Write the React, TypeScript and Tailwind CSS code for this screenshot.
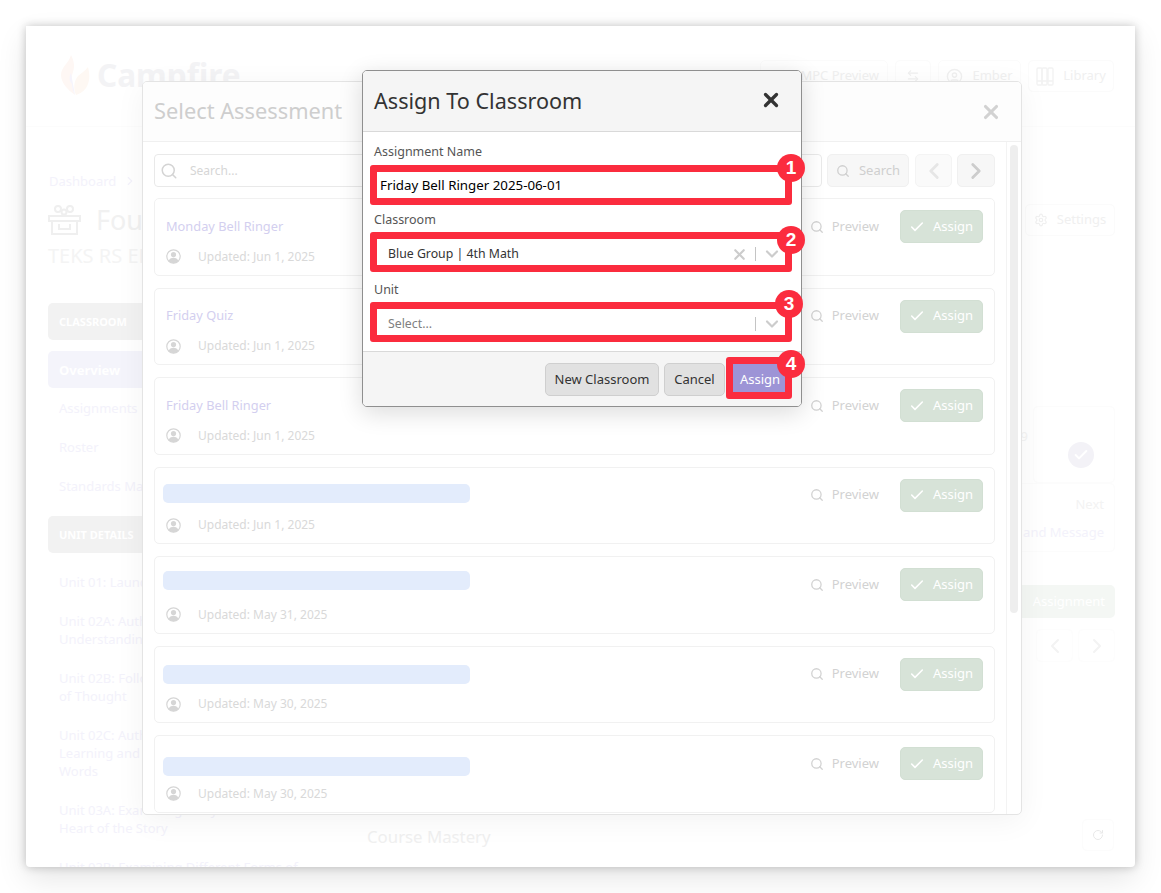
import { Search, Check, X, ChevronDown, ChevronLeft, ChevronRight, Settings, ArrowLeftRight, CircleUser, RotateCw } from "lucide-react";

const font = { fontFamily: '"Noto Sans", sans-serif' };

function UserIcon() {
  return (
    <svg width="15" height="15" viewBox="0 0 15 15" className="shrink-0">
      <circle cx="7.5" cy="7.5" r="6.7" fill="none" stroke="#d6d6d6" strokeWidth="1.2" />
      <circle cx="7.5" cy="5.6" r="2.6" fill="#d6d6d6" />
      <path d="M2.6 12c.8-2.4 2.6-3.3 4.9-3.3s4.1.9 4.9 3.3c-1.2 1.4-3 2.2-4.9 2.2s-3.7-.8-4.9-2.2z" fill="#d6d6d6" />
    </svg>
  );
}

function Flame() {
  return (
    <svg width="30" height="42" viewBox="0 0 30 42" className="shrink-0">
      <path d="M11 1C14 7 15 12 13 18c-2 5-2 14 2 23C8 36 1 29 1 21 1 13 9 9 11 1z" fill="#fef7f4" />
      <path d="M12 30c-3-3-3-7-1-11l4 22c-2-3-3-7-3-11z" fill="#f6f4fc" />
      <path d="M28 13c2 8 2 15-2 21-3 4-7 6-10 7-3-7-2-14 2-19 3-3 7-5 10-9z" fill="#fef8f3" />
    </svg>
  );
}

function GiftIcon() {
  return (
    <svg width="33" height="30" viewBox="0 0 33 30" fill="none" stroke="#efefef" strokeWidth="2" className="shrink-0">
      <circle cx="10" cy="4" r="3" />
      <circle cx="22" cy="4" r="3" />
      <circle cx="16" cy="7" r="2.5" />
      <path d="M1 11h31v5H1zM4 16v13h25V16M11 19v5h11v-5" />
    </svg>
  );
}

function LibraryIcon() {
  return (
    <svg width="18" height="19" viewBox="0 0 18 19" fill="none" stroke="#f2f2f2" strokeWidth="1.3" className="shrink-0">
      <rect x="1" y="1" width="5" height="17" rx="1" />
      <rect x="6" y="1" width="5" height="17" rx="1" />
      <rect x="12" y="1" width="5" height="17" rx="1" />
      <path d="M1 14h16" />
    </svg>
  );
}

const cards = [
  { title: "Monday Bell Ringer", date: "Jun 1, 2025", pad: "pt-[18px]" },
  { title: "Friday Quiz", date: "Jun 1, 2025", pad: "pt-[17px]" },
  { title: "Friday Bell Ringer", date: "Jun 1, 2025", pad: "pt-[18px]" },
  { title: "", date: "Jun 1, 2025", pad: "pt-[16px]" },
  { title: "", date: "May 31, 2025", pad: "pt-[14px]" },
  { title: "", date: "May 30, 2025", pad: "pt-[18px]" },
  { title: "", date: "May 30, 2025", pad: "pt-[21px]" },
];

function Card({ title, date, pad }: { title: string; date: string; pad: string }) {
  return (
    <div className="h-[77.5px] shrink-0 rounded-[5px] border border-[#f1f1f1] bg-white pl-[8px] pr-[11px] flex">
      <div className="flex-1 flex flex-col">
        <div className={"h-[47px] " + pad}>
          {title ? (
            <div className="pl-[3px] text-[12.8px] leading-[18px] text-[#d3cfef]">{title}</div>
          ) : (
            <div className="h-[19px] w-[307px] rounded-[5px] bg-[#e3ecfc]" />
          )}
        </div>
        <div className="flex items-center gap-[17px] pl-[3px] mt-[2.5px]">
          <UserIcon />
          <span className="text-[12px] leading-[16px] text-[#d9d9d9]">Updated: {date}</span>
        </div>
      </div>
      <div className="flex items-start pt-[11px]">
        <div className="flex items-center h-[33px] gap-[8px] text-[#d2d2d2] mr-[21px]">
          <Search size={14} strokeWidth={2.2} />
          <span className="text-[13px]">Preview</span>
        </div>
        <div className="flex items-center gap-[8px] pl-[8px] h-[33px] w-[83px] rounded-[5px] bg-[#d7e3d8] border border-[#d2dfd3] text-white">
          <Check size={16} strokeWidth={2.4} />
          <span className="text-[13px]">Assign</span>
        </div>
      </div>
    </div>
  );
}

function SelectAssessment() {
  return (
    <div className="absolute left-[142px] top-[81px] z-10 w-[880px] h-[734px] rounded-[5px] border border-[#e4e4e4] bg-white shadow-[0_6px_30px_rgba(0,0,0,0.05)] flex flex-col overflow-hidden">
      <div className="h-[60px] shrink-0 bg-[#fdfdfd] border-b border-[#f0f0f0] pl-[11px] pr-[19px] flex items-center justify-between">
        <span className="text-[21.8px] text-[#cecece]">Select Assessment</span>
        <X size={22} strokeWidth={3.4} className="text-[#d2d2d2]" />
      </div>
      <div className="flex-1 flex min-h-0">
        <div className="flex-1 pl-[11px] pr-[11px] pt-[12px] flex flex-col gap-[12px] overflow-hidden">
          <div className="flex items-stretch h-[33px] shrink-0 mb-[-1px]">
            <div className="flex-1 rounded-[4px] border border-[#e9e9e9] flex items-center pl-[5px] gap-[12px]">
              <Search size={18} strokeWidth={2} className="text-[#d4d4d4]" />
              <span className="text-[12px] text-[#d6d6d6]">Search...</span>
            </div>
            <div className="ml-[5px] w-[82px] rounded-[5px] bg-[#f7f7f7] border border-[#f0f0f0] flex items-center justify-center gap-[9px] text-[#cfcfcf]">
              <Search size={14} strokeWidth={2.2} />
              <span className="text-[13px]">Search</span>
            </div>
            <div className="ml-[6px] w-[37px] rounded-[5px] bg-[#fafafa] border border-[#f4f4f4] flex items-center justify-center text-[#e6e6e6]">
              <ChevronLeft size={26} strokeWidth={2.6} />
            </div>
            <div className="ml-[5px] w-[38px] rounded-[5px] bg-[#f7f7f7] border border-[#f0f0f0] flex items-center justify-center text-[#cdcdcd]">
              <ChevronRight size={26} strokeWidth={2.6} />
            </div>
          </div>
          {cards.map((c, i) => (
            <Card key={i} title={c.title} date={c.date} pad={c.pad} />
          ))}
        </div>
        <div className="w-[15px] shrink-0 border-l border-[#f3f3f3] pt-[3px] pl-[3px]">
          <div className="h-[468px] w-[8px] rounded-[4px] bg-[#eeeeee]" />
        </div>
      </div>
    </div>
  );
}

function SelectBox({ value, placeholder }: { value?: string; placeholder?: string }) {
  return (
    <div className="h-[26px] flex items-center pl-[14px] pr-[8px] bg-white">
      <span className={"flex-1 text-[12.3px] " + (value ? "text-[#333333]" : "text-[#808080]")}>{value || placeholder}</span>
      {value && <X size={17} strokeWidth={3} className="text-[#cccccc] mr-[7px]" />}
      <div className="h-[14px] w-[1px] bg-[#c4c4c4] mr-[6px]" />
      <ChevronDown size={20} strokeWidth={2.6} className="text-[#cccccc]" />
    </div>
  );
}

function AssignModal() {
  return (
    <div className="absolute left-[362px] top-[70px] z-20 w-[440px] h-[337px] rounded-[5px] border border-[#8f8f8f] bg-white shadow-[0_6px_24px_rgba(0,0,0,0.14)] flex flex-col overflow-hidden">
      <div className="h-[61px] shrink-0 bg-[#f5f5f5] border-b border-[#d9d9d9] pl-[11px] pr-[19px] flex items-center justify-between">
        <span className="text-[21.6px] text-[#333333]">Assign To Classroom</span>
        <X size={22} strokeWidth={3.6} className="text-[#333333] mb-[2px]" />
      </div>
      <div className="flex-1 px-[11px] pt-[11px]">
        <div className="text-[12.5px] leading-[18px] text-[#555555]">Assignment Name</div>
        <div className="h-[26px] mt-[12px] flex items-center pl-[6px] text-[13.3px] text-black">Friday Bell Ringer 2025-06-01</div>
        <div className="text-[12.5px] leading-[18px] text-[#555555] mt-[12px]">Classroom</div>
        <div className="mt-[12px]"><SelectBox value="Blue Group | 4th Math" /></div>
        <div className="text-[12.5px] leading-[18px] text-[#555555] mt-[14px]">Unit</div>
        <div className="mt-[12px]"><SelectBox placeholder="Select..." /></div>
      </div>
      <div className="h-[55px] shrink-0 bg-[#f5f5f5] border-t border-[#d9d9d9] flex items-start justify-end gap-[5px] pt-[11px] pr-[12px]">
        <div className="h-[33px] w-[114px] rounded-[5px] bg-[#e1e1e1] border border-[#cfcfcf] flex items-center justify-center text-[13px] text-[#333333]">New Classroom</div>
        <div className="h-[33px] w-[61px] rounded-[5px] bg-[#e1e1e1] border border-[#cfcfcf] flex items-center justify-center text-[13px] text-[#333333]">Cancel</div>
        <div className="h-[33px] w-[58px] ml-[1px] rounded-[5px] bg-[#9d94d6] flex items-center justify-center text-[13px] text-white">Assign</div>
      </div>
    </div>
  );
}

function Marks() {
  return (
    <>
      <div className="absolute z-30 left-[370px] top-[165px] w-[422px] h-[40px] rounded-[3px] border-[7px] border-[#fb2c3e]" />
      <div className="absolute z-30 left-[370px] top-[232px] w-[422px] h-[40px] rounded-[3px] border-[7px] border-[#fb2c3e]" />
      <div className="absolute z-30 left-[370px] top-[302px] w-[422px] h-[40px] rounded-[3px] border-[7px] border-[#fb2c3e]" />
      <div className="absolute z-30 left-[726px] top-[357px] w-[66px] h-[42px] rounded-[3px] border-[7px] border-[#fb2c3e]" />
      <div className="absolute z-40 left-[777px] top-[154px] w-[28px] h-[28px] rounded-full bg-[#fb2c3e] text-white flex items-center justify-center text-[19px] font-bold" style={{ fontFamily: '"Liberation Sans", sans-serif' }}>1</div>
      <div className="absolute z-40 left-[777px] top-[226px] w-[28px] h-[28px] rounded-full bg-[#fb2c3e] text-white flex items-center justify-center text-[19px] font-bold" style={{ fontFamily: '"Liberation Sans", sans-serif' }}>2</div>
      <div className="absolute z-40 left-[775px] top-[290px] w-[28px] h-[28px] rounded-full bg-[#fb2c3e] text-white flex items-center justify-center text-[19px] font-bold" style={{ fontFamily: '"Liberation Sans", sans-serif' }}>3</div>
      <div className="absolute z-40 left-[777px] top-[350px] w-[28px] h-[28px] rounded-full bg-[#fb2c3e] text-white flex items-center justify-center text-[19px] font-bold" style={{ fontFamily: '"Liberation Sans", sans-serif' }}>4</div>
    </>
  );
}

const navItems = ["Assignments", "Roster", "Standards Mastery"];
const units: string[][] = [
  ["Unit 01: Launching the Workshop"],
  ["Unit 02A: Author's Purpose and", "Understanding Main Ideas"],
  ["Unit 02B: Following an Author's Line", "of Thought"],
  ["Unit 02C: Authors Sharing Our", "Learning and Understanding Through", "Words"],
  ["Unit 03A: Examining Story Elements:", "Heart of the Story"],
  ["Unit 03B: Examining Different Forms of"],
];

function Sidebar() {
  return (
    <div className="w-[300px] shrink-0 text-[13px] leading-[18px] text-[#f3f2fb]">
      <div className="h-[37px] rounded-[5px] bg-[#f2f2f2] flex items-center pl-[11px] text-[11px] font-bold text-white">CLASSROOM</div>
      <div className="h-[37px] mt-[11px] rounded-[5px] bg-[#f4f4fb] flex items-center pl-[11px] text-[13px] font-bold text-white">Overview</div>
      {navItems.map((n) => (
        <div key={n} className="h-[39px] flex items-center pl-[11px]">{n}</div>
      ))}
      <div className="h-[37px] mt-[11px] rounded-[5px] bg-[#f2f2f2] flex items-center pl-[11px] text-[11px] font-bold text-white">UNIT DETAILS</div>
      <div className="pl-[11px] pt-[20px] flex flex-col gap-[21px]">
        {units.map((u) => (
          <div key={u[0]}>
            {u.map((l) => (
              <div key={l} className="whitespace-nowrap">{l}</div>
            ))}
          </div>
        ))}
      </div>
    </div>
  );
}

function TopButton({ children, className }: { children: React.ReactNode; className: string }) {
  return (
    <div className={"h-[32px] rounded-[5px] border border-[#fbfbfb] flex items-center gap-[9px] text-[13px] text-[#f0f0f0] " + className}>
      {children}
    </div>
  );
}

function Page() {
  return (
    <div className="absolute left-[26px] top-[26px] w-[1109px] h-[841px] rounded-b-[4px] bg-white shadow-[0_0_10px_rgba(0,0,0,0.22),0_12px_30px_rgba(0,0,0,0.1)] overflow-hidden">
      <div className="h-[101px] border-b border-[#fcfcfc] pl-[34px] pr-[21px] flex items-start justify-between">
        <div className="flex items-center gap-[7px] pt-[28px]">
          <Flame />
          <span className="text-[31.5px] leading-[42px] font-bold text-[#f3f3f5]">Campfire</span>
        </div>
        <div className="flex items-center gap-[7px] pt-[34px]">
          <TopButton className="w-[128px] justify-end pr-[8px]">
            <span>MPC Preview</span>
          </TopButton>
          <TopButton className="w-[36px] justify-center">
            <ArrowLeftRight size={14} />
          </TopButton>
          <TopButton className="w-[83px] justify-center">
            <CircleUser size={17} />
            <span>Ember</span>
          </TopButton>
          <TopButton className="w-[86px] justify-center">
            <LibraryIcon />
            <span>Library</span>
          </TopButton>
        </div>
      </div>
      <div className="pl-[22px] pr-[20px]">
        <div className="mt-[45px] pl-[1px] text-[13px] leading-[18px] text-[#f3f2fb] flex items-center gap-[7px]">
          <span>Dashboard</span>
          <ChevronRight size={14} />
        </div>
        <div className="mt-[14px] h-[32px] flex items-center justify-between">
          <div className="flex items-center gap-[15px]">
            <GiftIcon />
            <span className="text-[27px] text-[#f1f1f1]">Fourth Grade Reading</span>
          </div>
          <div className="h-[32px] w-[90px] rounded-[5px] border border-[#fbfbfb] flex items-center justify-center gap-[9px] text-[13px] text-[#f0f0f0]">
            <Settings size={14} />
            <span>Settings</span>
          </div>
        </div>
        <div className="mt-[7px] h-[26px] text-[20px] leading-[26px] text-[#f4f4f4]">TEKS RS ELA</div>
        <div className="mt-[34px] flex">
          <Sidebar />
          <div className="flex-1 ml-[19px] flex flex-col items-end pt-[103px]">
            <div className="flex items-start">
              <span className="mt-[21px] mr-[5px] text-[13px] leading-[18px] text-[#f3f3f3]">9</span>
              <div className="w-[82px] h-[77px] border border-[#fcfcfc] rounded-[5px] flex justify-end pr-[20px] pt-[35px]">
                <div className="w-[26px] h-[26px] rounded-full bg-[#f3f2f7] flex items-center justify-center text-white">
                  <Check size={16} strokeWidth={3} />
                </div>
              </div>
            </div>
            <div className="w-[100px] h-[69px] border border-[#fcfcfc] rounded-[5px] flex flex-col items-end pr-[10px] pt-[11px] gap-[10px] text-[13px] leading-[18px] text-[#f3f2fb]">
              <span className="text-[#f3f3f3]">Next</span>
              <span className="whitespace-nowrap">and Message</span>
            </div>
            <div className="mt-[33px] w-[100px] h-[33px] rounded-[5px] bg-[#f4f7f4] flex items-center justify-end pr-[10px] text-[13px] text-white">Assignment</div>
            <div className="mt-[11px] flex gap-[5px] text-[#f3f3f3]">
              <div className="w-[37px] h-[33px] rounded-[5px] border border-[#fdfdfd] flex items-center justify-center"><ChevronLeft size={24} /></div>
              <div className="w-[37px] h-[33px] rounded-[5px] border border-[#fdfdfd] flex items-center justify-center"><ChevronRight size={24} /></div>
            </div>
            <div className="mt-[157px] w-full flex items-center justify-between">
              <span className="pt-[3px] text-[16.8px] text-[#f0f0f0]">Course Mastery</span>
              <div className="w-[32px] h-[32px] mr-[1px] rounded-[5px] border border-[#fcfcfc] flex items-center justify-center text-[#e8e8e8]">
                <RotateCw size={12} />
              </div>
            </div>
          </div>
        </div>
      </div>
    </div>
  );
}

export default function App() {
  return (
    <div className="relative w-[1161px] h-[893px] overflow-hidden bg-white" style={font}>
      <Page />
      <SelectAssessment />
      <AssignModal />
      <Marks />
    </div>
  );
}
